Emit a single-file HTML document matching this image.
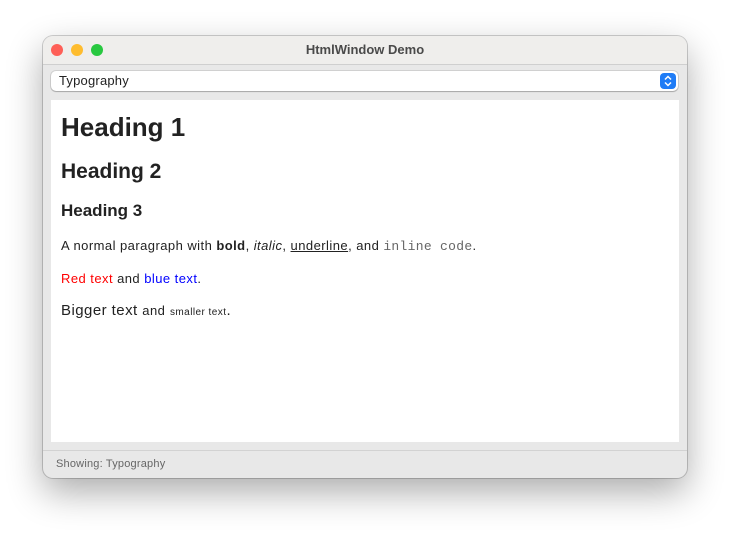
<!DOCTYPE html>
<html><head><style>
body{margin:0;width:733px;height:542px;background:#fff;font-family:"Liberation Sans",sans-serif;position:relative;overflow:hidden}
.win{position:absolute;left:43px;top:36px;width:644px;height:442px;border-radius:10px;background:#e8e8e8;box-shadow:0 14px 36px rgba(0,0,0,.33),0 0 0 1px rgba(0,0,0,.18);overflow:hidden}
.tb{height:28px;background:#efeeec;border-bottom:1px solid #cfcfcf;position:relative}
.dot{position:absolute;top:8px;width:12px;height:12px;border-radius:50%}
.title{position:absolute;left:0;right:0;top:6px;text-align:center;font-weight:bold;font-size:13px;color:#4a4a4a}
.pop{position:absolute;left:8px;top:35px;width:627px;height:20px;background:#fff;border-radius:5px;box-shadow:0 0 0 1px rgba(0,0,0,.1),0 1px 1px rgba(0,0,0,.2);font-size:13px;line-height:20px;padding-left:8px;box-sizing:border-box;color:#222;letter-spacing:0.2px}
.btn{position:absolute;right:2px;top:2px;width:16px;height:16px;border-radius:4px;background:#1f7cf6}
.content{position:absolute;left:8px;top:64px;width:628px;height:342px;background:#fff;color:#222}
.content div{position:absolute;left:10px;white-space:nowrap}
.p{letter-spacing:0.45px}
.sep{position:absolute;left:0;right:0;top:414px;border-top:1px solid #d2d2d2}
.status{position:absolute;left:13px;top:422px;font-size:11px;color:#666;letter-spacing:0.2px}
</style></head><body>
<div class="win">
<div class="tb">
<div class="dot" style="left:8px;background:#fe5f57"></div>
<div class="dot" style="left:28px;background:#febc2e"></div>
<div class="dot" style="left:48px;background:#28c840"></div>
<div class="title">HtmlWindow Demo</div>
</div>
<div class="pop">Typography<div class="btn"><svg width="16" height="16" viewBox="0 0 16 16"><path d="M5 6.5L8 3.5L11 6.5M5 9.5L8 12.5L11 9.5" fill="none" stroke="#fff" stroke-width="1.5"/></svg></div></div>
<div class="content">
<div style="top:12px;font-size:26px;font-weight:bold">Heading 1</div>
<div style="top:60px;font-size:21px;font-weight:bold">Heading 2</div>
<div style="top:101px;font-size:17px;font-weight:bold">Heading 3</div>
<div class="p" style="top:138px;font-size:13px">A normal paragraph with <b>bold</b>, <i>italic</i>, <u>underline</u>, and <span style="font-family:'Liberation Mono',monospace;color:#666;letter-spacing:0.3px">inline code</span>.</div>
<div class="p" style="top:171px;font-size:13px"><span style="color:#f00">Red text</span> and <span style="color:#00f">blue text</span>.</div>
<div class="p" style="top:202px;font-size:15px">Bigger text <span style="font-size:13px">and</span> <span style="font-size:10px">smaller text</span>.</div>
</div>
<div class="sep"></div>
<div class="status">Showing: Typography</div>
</div>
</body></html>
